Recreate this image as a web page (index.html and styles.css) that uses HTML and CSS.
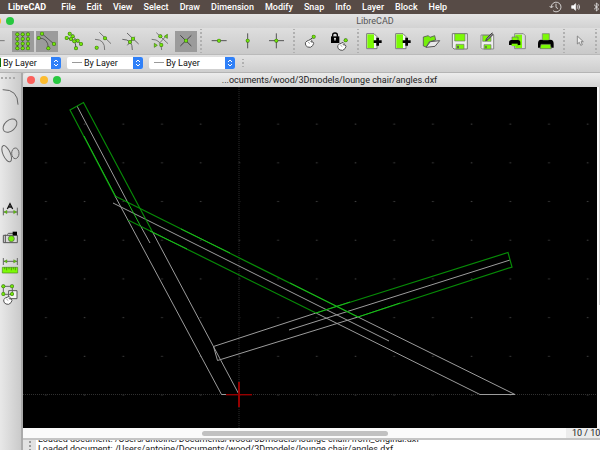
FILE: index.html
```html
<!DOCTYPE html>
<html lang="en">
<head>
<meta charset="utf-8">
<title>LibreCAD</title>
<link rel="stylesheet" href="styles.css">
</head>
<body>
<svg class="defs" aria-hidden="true">
  <defs>
    <g id="node"><circle r="6" fill="#3a7410"/><circle r="4.2" fill="#74e60c"/></g>
    <g id="hand"><path d="M-13 1l5-5 5-2 6-3 3 3-1 4 5 1 2 4-3 7-7 5-8-1-6-5z" fill="#fff" stroke="#555" stroke-width="3"/><path d="M-5-1l6 5M1-5l5 6" stroke="#777" stroke-width="2" fill="none"/></g>
    <g id="newdoc"><path d="M500 101h22l9 9v36h-31z" fill="#f4f4f4" stroke="#777" stroke-width="3"/><path d="M502 103h20v41h-20z" fill="#7cfa05"/><path d="M533 113v24M521 125h24" stroke="#000" stroke-width="8"/></g>
  </defs>
</svg>
<nav class="menubar">
  <a href="#" class="app">LibreCAD</a><a href="#">File</a><a href="#">Edit</a><a href="#">View</a><a href="#">Select</a><a href="#">Draw</a><a href="#">Dimension</a><a href="#">Modify</a><a href="#">Snap</a><a href="#">Info</a><a href="#">Layer</a><a href="#">Block</a><a href="#">Help</a>
  <svg class="status" viewBox="444 0 156 42" width="52" height="14" fill="none" stroke="#eee" stroke-width="2.4" aria-hidden="true"><path d="M454 21a14.500 14.500 0 1 1 5 11M449 18l5 6 6-6M468 11v11l6 4"/><path d="M515 17h5l7-6v20l-7-6h-5z" fill="#fff"/><path d="M532 16q4 5 0 10M536 13q6 8 0 16"/><path d="M582 14l14 13-7 6V9l7 6-14 13"/></svg>
</nav>
<header class="titlebar"><span class="lights partial"><i class="min"></i><i class="max"></i></span><h1>LibreCAD</h1></header>
<div class="toolbar" role="toolbar" aria-label="Snap and file tools">
  <button class="edge" aria-label="Line"><svg viewBox="0 93 30 63" width="10" height="21"><path d="M0 122h14" stroke="#777" stroke-width="3"/></svg></button>
  <button class="small on" aria-label="Snap on grid"><svg viewBox="36 93 66 63" width="22" height="21"><path d="M52 103v42M68 103v42M84 103v42" stroke="#555" stroke-width="3"/><use href="#node" x="52" y="103"/><use href="#node" x="68" y="103"/><use href="#node" x="84" y="103"/><use href="#node" x="52" y="117"/><use href="#node" x="68" y="117"/><use href="#node" x="84" y="117"/><use href="#node" x="52" y="131"/><use href="#node" x="68" y="131"/><use href="#node" x="84" y="131"/><use href="#node" x="52" y="145"/><use href="#node" x="68" y="145"/><use href="#node" x="84" y="145"/></svg></button>
  <button class="small on" aria-label="Snap on endpoints"><svg viewBox="110 93 66 63" width="22" height="21"><path d="M128 101l36 31M118 114q29 0 29 31" fill="none" stroke="#555" stroke-width="3"/><use href="#node" x="128" y="101"/><use href="#node" x="164" y="132"/><use href="#node" x="118" y="114"/><use href="#node" x="147" y="145"/></svg></button>
  <button class="mid" aria-label="Snap on entity"><svg viewBox="180 93 78 63" width="26" height="21"><path d="M209 101l34 31M200 114q28 0 28 31" fill="none" stroke="#555" stroke-width="3"/><use href="#node" x="209" y="101"/><use href="#node" x="218" y="109"/><use href="#node" x="233" y="122"/><use href="#node" x="243" y="132"/><use href="#node" x="200" y="114"/><use href="#node" x="213" y="117"/><use href="#node" x="223" y="124"/><use href="#node" x="228" y="145"/></svg></button>
  <button class="wide" aria-label="Snap center"><svg viewBox="264 93 81 63" width="27" height="21"><path d="M298 97l35 34M285 118q30 0 29 32" fill="none" stroke="#777" stroke-width="3"/><use href="#node" x="315" y="115"/><use href="#node" x="290" y="143"/></svg></button>
  <button class="wide" aria-label="Snap middle"><svg viewBox="351 93 81 63" width="27" height="21"><path d="M381 99l35 33M367 118q31 0 30 32M382 136l22-26" fill="none" stroke="#666" stroke-width="3"/><use href="#node" x="399" y="116"/><use href="#node" x="390" y="126"/></svg></button>
  <button class="wide" aria-label="Snap distance"><svg viewBox="438 93 81 63" width="27" height="21"><path d="M469 98l35 33M455 118q30 0 30 32M478 130l24-26" fill="none" stroke="#777" stroke-width="3"/><use href="#node" x="481" y="109"/><use href="#node" x="484" y="135"/><path d="M502 103v12l-9-6zM463 130v12l9-6z" fill="#74e60c" stroke="#3f7a12" stroke-width="2"/></svg></button>
  <button class="small on" aria-label="Snap intersection"><svg viewBox="525 93 66 63" width="22" height="21"><path d="M541 106l33 32M541 138l33-32" stroke="#444" stroke-width="3"/><use href="#node" x="558" y="122"/></svg></button>
  <i class="sep"></i>
  <button class="wide" aria-label="Restrict horizontal"><svg viewBox="15 93 81 63" width="27" height="21"><path d="M35 122h45" stroke="#555" stroke-width="3"/><use href="#node" x="57" y="122"/></svg></button>
  <button class="wide" aria-label="Restrict vertical"><svg viewBox="102 93 81 63" width="27" height="21"><path d="M143 100v45" stroke="#555" stroke-width="3"/><use href="#node" x="143" y="122"/></svg></button>
  <button class="wide" aria-label="Restrict orthogonal"><svg viewBox="189 93 81 63" width="27" height="21"><path d="M207 122h45M229 100v45" stroke="#555" stroke-width="3"/><use href="#node" x="229" y="122"/></svg></button>
  <i class="sep"></i>
  <button class="wide" aria-label="Set relative zero"><svg viewBox="294 93 81 63" width="27" height="21"><path d="M328 121l12-10" stroke="#444" stroke-width="3"/><use href="#hand" x="329" y="127"/><use href="#node" x="341" y="110"/></svg></button>
  <button class="wide" aria-label="Lock relative zero"><svg viewBox="381 93 81 63" width="27" height="21"><path d="M393 109h25v20h-25z"/><path d="M398 110v-5q0-6 7-6t7 6v5" fill="none" stroke="#000" stroke-width="4"/><circle cx="405" cy="116" r="3" fill="#eee"/><path d="M405 117v6" stroke="#eee" stroke-width="2"/><use href="#hand" x="426" y="136"/><use href="#node" x="437" y="121"/></svg></button>
  <i class="sep"></i>
  <button class="file" aria-label="New"><svg viewBox="486 93 78 63" width="26" height="21"><use href="#newdoc"/></svg></button>
  <button class="file" aria-label="New from template"><svg viewBox="486 93 78 63" width="26" height="21"><use href="#newdoc" x="3"/></svg></button>
  <button class="file" aria-label="Open"><svg viewBox="54 93 78 63" width="26" height="21"><path d="M70 138v-27l15-4 5 5 14-5 3 13-19 5-9 16z" fill="#74f00a" stroke="#555" stroke-width="2.500"/><path d="M78 142l13-17 28-3-14 17z" fill="#e8e8e8" stroke="#555" stroke-width="3"/></svg></button>
  <button class="file" aria-label="Save"><svg viewBox="138 93 78 63" width="26" height="21"><path d="M157 101h45v46h-40l-5-5z" fill="#eee" stroke="#777" stroke-width="3"/><path d="M164 101h31v22h-31zM168 133h24v14h-24z" fill="#7cfa05" stroke="#777" stroke-width="2"/><path d="M174 137v8" stroke="#555" stroke-width="5"/></svg></button>
  <button class="file" aria-label="Save as"><svg viewBox="222 93 78 63" width="26" height="21"><path d="M243 105h38v42h-34l-4-4z" fill="#eee" stroke="#888" stroke-width="3"/><path d="M248 106h25v18h-25zM252 134h21v13h-21z" fill="#7cfa05" stroke="#777" stroke-width="2"/><path d="M258 138v7" stroke="#555" stroke-width="4"/><path d="M277 98l-17 17-3 7 7-3 16-17" fill="#888" stroke="#444" stroke-width="3"/></svg></button>
  <button class="file" aria-label="Print preview"><svg viewBox="306 93 78 63" width="26" height="21"><path d="M344 101h26l6 6v39h-32z" fill="#ddd" stroke="#777" stroke-width="2.500"/><path d="M346 104h20v40h-20z" fill="#7cfa05"/><path d="M336 111h18v26h-18z" fill="#7cfa05" stroke="#666" stroke-width="2"/><path d="M327 128q0-8 7-8h20q7 0 7 8v7h-34z"/><path d="M335 131h18v7h-18z" fill="#7cfa05"/></svg></button>
  <button class="file" aria-label="Print"><svg viewBox="390 93 78 63" width="26" height="21"><path d="M427 101h21v20h-21z" fill="#7cfa05" stroke="#777" stroke-width="2"/><path d="M414 131q0-12 9-12 14 4 28 0 10 0 10 12v12h-47z"/><path d="M423 133h28l3 13h-34z" fill="#7cfa05" stroke="#666" stroke-width="2"/></svg></button>
  <i class="sep loose"></i>
  <button class="pick" aria-label="Select"><svg viewBox="516 93 48 63" width="16" height="21"><path d="M532 108v24l6-5 4 9 5-2-4-9h7z" fill="#eee" stroke="#777" stroke-width="2.500"/></svg></button>
  <i class="sep loose"></i>
</div>
<div class="options">
  <label class="combo color"><i class="swatch"></i><select aria-label="Pen color"><option>By Layer</option></select><svg viewBox="0 0 10 12"><path d="M3 5l2-2 2 2M3 7l2 2 2-2"/></svg></label>
  <label class="combo width"><i class="dash"></i><select aria-label="Pen width"><option>By Layer</option></select><svg viewBox="0 0 10 12"><path d="M3 5l2-2 2 2M3 7l2 2 2-2"/></svg></label>
  <label class="combo style"><i class="dash"></i><select aria-label="Line type"><option>By Layer</option></select><svg viewBox="0 0 10 12"><path d="M3 5l2-2 2 2M3 7l2 2 2-2"/></svg></label>
  <i class="sep short"></i>
</div>
<main class="workspace">
  <aside class="dock">
    <i class="grip"></i>
    <button aria-label="Arc"><svg viewBox="0 42 66 84"><path d="M8 59q46-1 46 45" class="ink"/></svg></button>
    <button aria-label="Ellipse"><svg viewBox="0 126 66 84"><ellipse cx="30" cy="167" rx="24" ry="16" transform="rotate(-42 30 167)" class="ink"/></svg></button>
    <button aria-label="Spline"><svg viewBox="0 210 66 84"><ellipse cx="20" cy="251" rx="11" ry="26" transform="rotate(-24 20 251)" class="ink"/><ellipse cx="46" cy="250" rx="11" ry="16" class="ink"/></svg></button>
    <button class="apart" aria-label="Dimension"><svg viewBox="0 18 66 84"><path d="M10 53v23M52 53v23M10 66h42" class="ink"/><path d="M12 66l9-5v10zM50 66l-9-5v10z" fill="#64c513" stroke="#3f7a12"/><path d="M22 57l8-16 8 16M25 51h10" fill="none" stroke="#111" stroke-width="4"/></svg></button>
    <button aria-label="Insert image"><svg viewBox="0 102 66 84"><path d="M10 136h42v22h-42zM16 158v-24M22 134l3-4h14l3 6" fill="#d8d8d8" stroke="#555" stroke-width="3"/><path d="M38 125h13v11h-13z"/><circle cx="34" cy="146" r="9" fill="#74f00a" stroke="#555" stroke-width="2"/></svg></button>
    <button aria-label="Measure"><svg viewBox="0 186 66 84"><path d="M10 204v21M52 204v21M10 214h42" class="ink"/><path d="M12 214l9-5v10zM50 214l-9-5v10z" fill="#64c513" stroke="#3f7a12"/><path d="M7 232h46v17h-46z" fill="#7cfa05" stroke="#4a8a20" stroke-width="2"/><path d="M14 232v6M20 232v9M27 232v6M34 232v9M40 232v6M46 232v9" stroke="#386b14" stroke-width="2"/></svg></button>
    <button aria-label="Create block"><svg viewBox="0 270 66 84"><path d="M26 302h25v24h-25z" fill="#f4f4f4" stroke="#555" stroke-width="3"/><path d="M10 289h27v24h-27z" class="ink"/><use href="#hand" x="24" y="328"/><use href="#node" x="10" y="289"/><use href="#node" x="36" y="289"/><use href="#node" x="10" y="312"/><use href="#node" x="36" y="312"/></svg></button>
  </aside>
  <section class="mdi">
    <header class="doc-title"><span class="lights"><i class="close"></i><i class="min"></i><i class="max"></i></span><h2>...ocuments/wood/3Dmodels/lounge chair/angles.dxf</h2></header>
    <div class="view">
      <svg class="drawing" viewBox="23 87 574 341" preserveAspectRatio="xMidYMid slice" role="img" aria-label="Lounge chair side view">
        <defs><pattern id="dots" x="26.500" y="104.800" width="38.700" height="38.700" patternUnits="userSpaceOnUse"><path d="M18.600 19.300h1.600" stroke="#444" stroke-width="1"/></pattern></defs>
        <rect x="23" y="87" width="574" height="341" fill="url(#dots)"/>
        <path d="M23 394.500h574" stroke="#303030" stroke-dasharray="1 1"/>
        <path d="M239 87v341" stroke="#161616" stroke-width="2" stroke-dasharray="1 1"/>
        <g fill="none" stroke="#9c9c9c">
          <path d="M77 106L127 201M140 225L150 243"/>
          <path d="M115 196L221.500 394.500H239L152 231"/>
          <path d="M113 203L389 341"/>
          <path d="M316 313L480 394.500H515L358 317"/>
          <path d="M316 313L213.500 346.500L217.500 360.500L358 317"/>
          <path d="M289 330L510 260"/>
        </g>
        <g fill="none" stroke="#078a07" stroke-width="1.200">
          <path d="M115 196L70 110L83.500 102.500L152 231"/>
          <path d="M115 196L358 317M128 220L316 313"/>
          <path d="M316 313L508 252.500L512 267L358 317"/>
        </g>
        <path d="M84 136L116 197M127 201L140 225M181 229L230 253M150 231L187 249M290 283L358 317L400 303M316 313L350 302" fill="none" stroke="#1db81d"/>
        <g fill="#960000"><rect x="226" y="394" width="26" height="1.400"/><rect x="238" y="382" width="2" height="25"/></g>
      </svg>
      <div class="vscroll"><i></i></div>
    </div>
    <div class="hscroll"><div class="track"><i></i></div><output>10 / 10</output></div>
    <div class="log"><i class="grip-v"></i><div class="lines"><p>Loaded document: /Users/antoine/Documents/wood/3Dmodels/lounge chair/from_original.dxf</p><p>Loaded document: /Users/antoine/Documents/wood/3Dmodels/lounge chair/angles.dxf</p></div></div>
  </section>
</main>
</body>
</html>
```

FILE: styles.css
```css
* { box-sizing: border-box; }
body {
  margin: 0;
  height: 100vh;
  display: flex;
  flex-direction: column;
  overflow: hidden;
  background: #d6d6d6;
  color: #222;
  font: 9px/12px Roboto, "Noto Sans", sans-serif;
}
h1, h2, p { margin: 0; font-size: 9px; font-weight: 400; }
button { border: 0; padding: 0; background: none; display: flex; align-items: center; justify-content: center; flex: none; }
svg { display: block; flex: none; }
.defs { position: absolute; width: 0; height: 0; }

.menubar {
  flex: none;
  height: 14px;
  display: flex;
  align-items: center;
  gap: 11px;
  padding-left: 8px;
  background: #574b46;
  overflow: hidden;
}
.menubar a { color: #fff; text-decoration: none; font-weight: 500; line-height: 14px; }
.menubar .app { font-weight: 700; padding-right: 4px; }
.status { margin-left: auto; }

.titlebar, .doc-title {
  flex: none;
  height: 14px;
  display: grid;
  grid-template-columns: 60px 1fr 60px;
  align-items: center;
  text-align: center;
}
.titlebar { padding-left: 150px; background: linear-gradient(#e4e4e4, #d2d2d2); }
.titlebar h1 { color: #555; }
.lights { display: flex; gap: 5px; padding-left: 4px; }
.lights i { width: 8px; height: 8px; border-radius: 50%; }
.lights.partial { margin-left: -161px; }
.close { background: #fc605b; }
.min { background: #fdbc2f; }
.max { background: #28c840; }

.toolbar {
  flex: none;
  height: 27px;
  display: flex;
  align-items: center;
  gap: 2px;
  overflow: hidden;
  background: linear-gradient(#dedede, #c9c9c9);
  border-bottom: 1px solid #bababa;
}
.toolbar button { height: 21px; }
.edge { width: 10px; }
.small { width: 22px; }
.mid, .file { width: 26px; }
.wide { width: 27px; }
.pick { width: 16px; }
.on { background: #9b9b9b; }
.sep { flex: none; width: 4px; height: 24px; background: radial-gradient(circle, #b0b0b0 0 1px, transparent 1px) center / 4px 4px; }
.sep.loose { width: 12px; background-repeat: repeat-y; }
.sep.short { height: 8px; }

.options {
  flex: none;
  height: 18px;
  display: flex;
  align-items: center;
  gap: 6px;
  padding-bottom: 2px;
  background: linear-gradient(#e2e2e2, #cecece);
  border-bottom: 1px solid #b4b4b4;
}
.combo { display: flex; align-items: center; height: 12px; background: #fff; border-radius: 2px; overflow: hidden; flex: none; }
.combo select { flex: 1; min-width: 0; height: 12px; appearance: none; border: 0; padding: 0 0 0 2px; background: none; color: #111; font: inherit; }
.combo svg { width: 10px; height: 12px; background: #2f80f8; fill: none; stroke: #fff; stroke-width: 1; }
.color { width: 61px; }
.width { width: 76px; }
.style { width: 86px; }
.swatch { width: 1px; height: 9px; background: #087008; }
.dash { width: 10px; height: 1px; margin-left: 5px; background: #999; }

.workspace { flex: 1; min-height: 0; display: flex; }
.dock { flex: none; width: 22px; background: linear-gradient(90deg, #e8e8e8, #cacaca); border-right: 1px solid #aaa; overflow: hidden; }
.dock button { width: 22px; height: 28px; }
.dock svg { width: 22px; height: 28px; }
.dock .apart { margin-top: 28px; }
.ink { fill: none; stroke: #666; stroke-width: 3; }
.grip { display: block; height: 11px; margin-right: 5px; background: radial-gradient(circle, #aaa 0 1px, transparent 1px) 0 3px / 4px 4px repeat-x; }

.mdi { flex: 1; min-width: 0; display: flex; flex-direction: column; border-left: 1px solid #aaa; }
.doc-title { background: linear-gradient(#ececec, #d3d3d3); border-top-left-radius: 4px; }
.doc-title h2 { color: #222; padding-left: 36px; white-space: nowrap; }
.view { flex: 1; min-height: 0; display: flex; background: #000; }
.drawing { flex: 1; min-width: 0; height: 100%; }
.vscroll { flex: none; width: 3px; background: #fafafa; }
.vscroll i { display: block; margin-left: 2px; height: 64%; background: #d0d0d0; }
.hscroll { flex: none; height: 12px; display: flex; background: #fafafa; border-bottom: 2px solid #c4c4c4; }
.track { flex: 1; padding: 3px 0 0 31%; }
.track i { display: block; width: 51%; height: 5px; border-radius: 3px; background: #c1c1c1; }
.hscroll output { width: 34px; padding-left: 6px; background: #ececec; line-height: 10px; white-space: nowrap; overflow: hidden; }
.log { flex: none; height: 10px; display: flex; background: #fff; overflow: hidden; }
.grip-v { flex: none; width: 13px; background: #e2e2e2 radial-gradient(circle, #999 0 1px, transparent 1px) 5px 0 / 4px 4px repeat-y; }
.lines { padding-left: 2px; margin-top: -6px; white-space: nowrap; }
.lines p { line-height: 10px; }
```
